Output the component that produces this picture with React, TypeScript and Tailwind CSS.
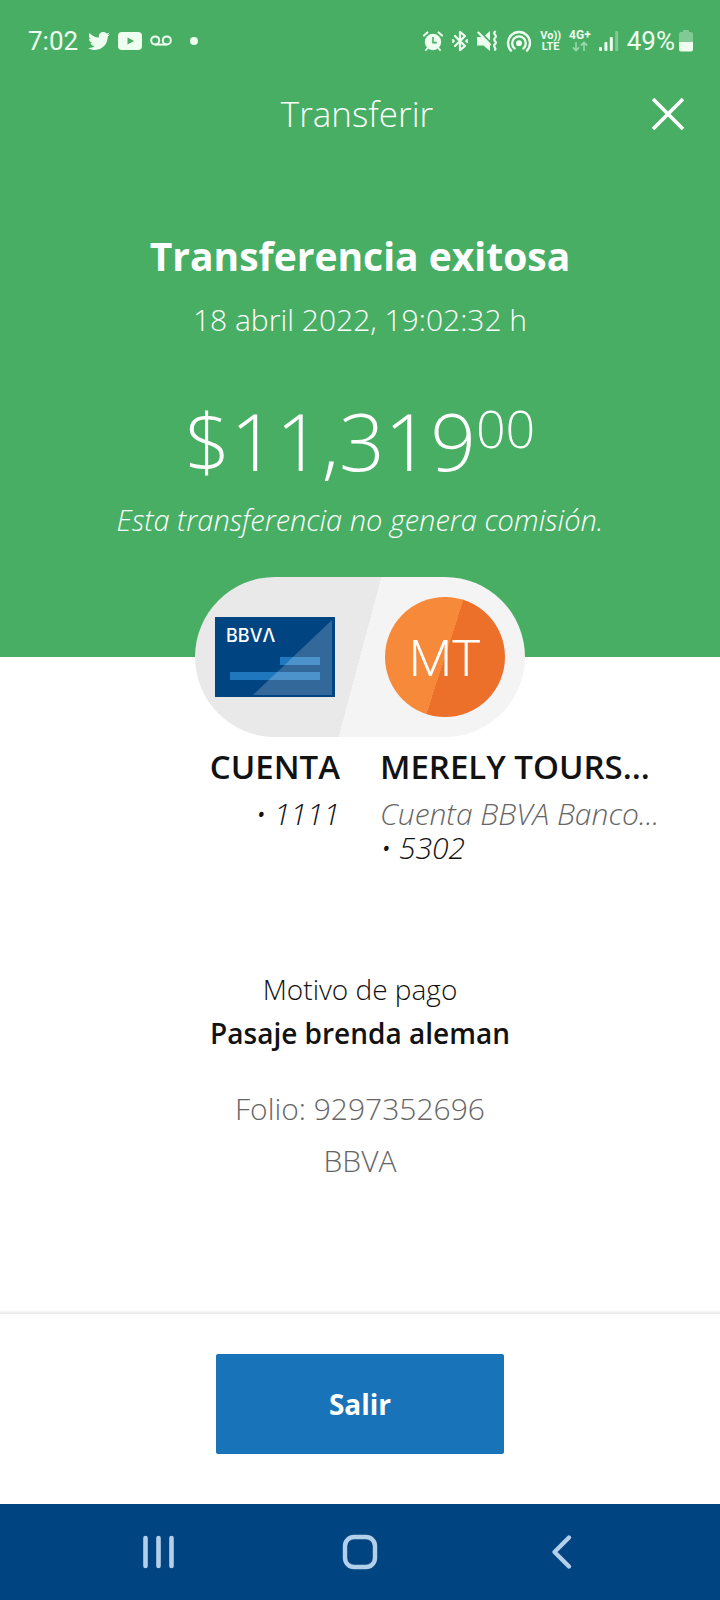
import type { ReactNode } from "react";
import { FaTwitter } from "react-icons/fa";

function YoutubeIcon() {
  return (
    <svg width="24" height="18" viewBox="0 0 24 18" aria-hidden="true">
      <rect width="24" height="18" rx="4" fill="currentColor" />
      <path d="M9.5 5.4v7.2l6.6-3.6z" fill="#48ae64" />
    </svg>
  );
}

function VoicemailIcon() {
  return (
    <svg width="22" height="12" viewBox="0 0 22 12" fill="none" stroke="currentColor" strokeWidth="2" aria-hidden="true">
      <circle cx="5.2" cy="5.4" r="4" />
      <circle cx="16.8" cy="5.4" r="4" />
      <path d="M5 9.6h12" />
    </svg>
  );
}

function AlarmIcon() {
  return (
    <svg width="20" height="20" viewBox="0 0 20 20" fill="none" aria-hidden="true">
      <circle cx="10" cy="11" r="8.2" fill="currentColor" />
      <path d="M1 4.6 4.4 1.4M19 4.6 15.6 1.4M4.6 17 3 19M15.4 17l1.6 2" stroke="currentColor" strokeWidth="2" strokeLinecap="round" />
      <path d="M10 6v5.6h3.8" stroke="#48ae64" strokeWidth="1.6" />
    </svg>
  );
}

function BluetoothIcon() {
  return (
    <svg width="18" height="22" viewBox="0 0 18 22" fill="none" stroke="currentColor" strokeWidth="2.2" aria-hidden="true">
      <path d="M4 6l10 10-5 4.2V1.8L14 6 4 16" strokeLinejoin="round" strokeLinecap="round" />
      <path d="M1.4 9.2 3 11l-1.6 1.8M16.6 9.2 15 11l1.6 1.8" fill="currentColor" strokeWidth="1.6" />
    </svg>
  );
}

function MuteIcon() {
  return (
    <svg width="21" height="22" viewBox="0 0 21 22" fill="none" aria-hidden="true">
      <path d="M0 7h5.2L13 14.8V21l-6.6-5.6H0z" fill="currentColor" />
      <path d="M8 5.6 13 1v9.4z" fill="currentColor" />
      <path d="M1.4 2.6 13 14.4" stroke="currentColor" strokeWidth="2.2" strokeLinecap="round" />
      <path d="M18 1.6c-3 2.4 3 3.8 0 6.4s3 3.8 0 6.2 2 3.6 0 5.6" stroke="currentColor" strokeWidth="2.2" strokeLinecap="round" />
    </svg>
  );
}

function HotspotIcon() {
  return (
    <svg width="26" height="22" viewBox="0 0 26 22" fill="none" stroke="currentColor" strokeWidth="2.4" strokeLinecap="round" aria-hidden="true">
      <circle cx="13" cy="13.2" r="3" fill="currentColor" stroke="none" />
      <path d="M8.6 18.4a6.8 6.8 0 1 1 8.8 0" />
      <path d="M5 20.6a11 11 0 1 1 16 0" />
    </svg>
  );
}

function SignalIcon() {
  return (
    <svg width="20" height="20" viewBox="0 0 20 20" fill="currentColor" aria-hidden="true">
      <rect x="0" y="16" width="3" height="4" rx="1" />
      <rect x="5.4" y="11" width="3" height="9" rx="1" />
      <rect x="10.8" y="6" width="3" height="14" rx="1" />
      <rect x="16.2" y="0" width="3" height="20" rx="1" opacity=".35" />
    </svg>
  );
}

function BatteryIcon() {
  return (
    <svg width="14" height="22" viewBox="0 0 14 22" fill="currentColor" aria-hidden="true">
      <path d="M4 0h6v2h2a2 2 0 0 1 2 2v8H0V4a2 2 0 0 1 2-2h2z" opacity=".35" />
      <path d="M0 12h14v7.5a2 2 0 0 1-2 2H2a2 2 0 0 1-2-2z" />
    </svg>
  );
}

function StatusBar() {
  return (
    <div className="flex h-20 items-center justify-between pl-7 pr-[27px] pt-0.5 font-['Roboto',sans-serif] text-[#eefff0]">
      <div className="flex items-center gap-2">
        <span className="pr-0.5 text-[26px] leading-none">7:02</span>
        <FaTwitter size={22} aria-hidden="true" />
        <YoutubeIcon />
        <VoicemailIcon />
        <span className="ml-2.5 size-2 rounded-full bg-current" />
      </div>
      <div className="flex items-center gap-2">
        <AlarmIcon />
        <BluetoothIcon />
        <MuteIcon />
        <HotspotIcon />
        <div className="flex flex-col items-center text-[11px] font-bold leading-[11px]">
          <span>Vo))</span>
          <span>LTE</span>
        </div>
        <div className="flex flex-col items-center text-xs font-bold leading-[11px]">
          <span>4G+</span>
          <svg width="16" height="11" viewBox="0 0 16 11" fill="none" stroke="currentColor" strokeWidth="1.6" opacity=".5" aria-hidden="true">
            <path d="M4 1v8.6M.8 6.4 4 9.6l3.2-3.2M12 10V1.4M8.8 4.6 12 1.4l3.2 3.2" />
          </svg>
        </div>
        <SignalIcon />
        <div className="flex items-center gap-1">
          <span className="text-[26px] leading-none">49%</span>
          <BatteryIcon />
        </div>
      </div>
    </div>
  );
}

function AccountCard() {
  return (
    <svg width="120" height="80" viewBox="0 0 120 80" role="img" aria-label="BBVA">
      <rect width="120" height="80" fill="#004481" />
      <path d="M65 40h40v8H65zM15 55h90v8H15z" fill="#1f78bd" />
      <path d="M117 3v75H38z" fill="#fff" opacity=".2" />
      <text x="11" y="25" fill="#fff" className="font-['Inter',sans-serif] text-[18px] font-medium">
        BBVΛ
      </text>
    </svg>
  );
}

function NavButton({ label, children }: { label: string; children: ReactNode }) {
  return (
    <button type="button" aria-label={label} className="flex h-full w-24 items-center justify-center">
      <svg width="36" height="36" viewBox="0 0 36 36" fill="none" stroke="#b4cfea" strokeLinecap="round" strokeLinejoin="round">
        {children}
      </svg>
    </button>
  );
}

export default function App() {
  return (
    <div className="flex min-h-screen flex-col bg-white font-['Open_Sans',sans-serif] text-[#121212]">
      <header className="bg-[#48ae64] pb-[117px] text-center text-white">
        <StatusBar />
        <div className="grid grid-cols-[60px_1fr_60px] items-center pl-4 pr-[22px]">
          <h1 className="col-start-2 text-[35px] font-light leading-[68px]">Transferir</h1>
          <button type="button" aria-label="Cerrar" className="flex size-[60px] items-center justify-center">
            <svg width="32" height="32" viewBox="0 0 32 32" stroke="currentColor" strokeWidth="3.6">
              <path d="M1 1l30 30M31 1 1 31" />
            </svg>
          </button>
        </div>
        <h2 className="mt-20 text-[39px] font-bold leading-[56px]">Transferencia exitosa</h2>
        <p className="mt-4 text-[30px] font-light leading-10">18 abril 2022, 19:02:32 h</p>
        <p className="mt-14 flex items-start justify-center text-[80px] font-light leading-[88px]">
          <span>$11,319</span>
          <span className="text-[52px] leading-[64px]">00</span>
        </p>
        <p className="mt-4 text-[29px] font-light italic leading-10">Esta transferencia no genera comisión.</p>
      </header>

      <main className="flex-1">
        <div className="relative mx-auto -mt-20 flex h-40 w-[330px] items-center justify-between rounded-full bg-[linear-gradient(105deg,#e9e9e9_50%,#f4f4f4_50%)] px-5">
          <AccountCard />
          <span className="flex size-[120px] items-center justify-center rounded-full bg-[linear-gradient(108deg,#f7893b_50%,#ec7029_50%)] pt-1 font-['Roboto',sans-serif] text-[50px] font-light text-white">
            MT
          </span>
        </div>

        <div className="mt-2 grid grid-cols-2 gap-10">
          <div className="text-right">
            <p className="text-[33px] font-semibold leading-[44px]">CUENTA</p>
            <p className="mt-2 text-[30px] font-light italic leading-[34px]">• 1111</p>
          </div>
          <div>
            <p className="text-[33px] font-semibold leading-[44px]">MERELY TOURS...</p>
            <p className="mt-2 text-[30px] font-light italic leading-[34px] text-[#666]">Cuenta BBVA Banco...</p>
            <p className="text-[30px] font-light italic leading-[34px]">• 5302</p>
          </div>
        </div>

        <div className="mt-[102px] text-center text-[28px] leading-[44px]">
          <p className="font-light">Motivo de pago</p>
          <p className="font-semibold">Pasaje brenda aleman</p>
          <p className="mt-8 text-[30px] font-light leading-[44px] text-[#666]">Folio: 9297352696</p>
          <p className="mt-2 text-[30px] font-light leading-[44px] text-[#666]">BBVA</p>
        </div>
      </main>

      <div className="h-1 bg-linear-to-b from-white to-[#e6e6e6]" />
      <div className="flex justify-center pb-[50px] pt-10">
        <button type="button" className="h-[100px] w-2/5 rounded-xs bg-[#1973b8] text-[28px] font-bold text-white">
          Salir
        </button>
      </div>

      <nav className="flex h-24 items-center justify-between bg-[#004481] px-[110px]">
        <NavButton label="Recientes">
          <path d="M5.5 4v28M18.5 4v28M31.5 4v28" strokeWidth="4.6" />
        </NavButton>
        <NavButton label="Inicio">
          <rect x="3" y="3" width="30" height="30" rx="9" strokeWidth="4.4" />
        </NavButton>
        <NavButton label="Atrás">
          <path d="M25 3.5 10.5 18 25 32.5" strokeWidth="4.4" />
        </NavButton>
      </nav>
    </div>
  );
}
